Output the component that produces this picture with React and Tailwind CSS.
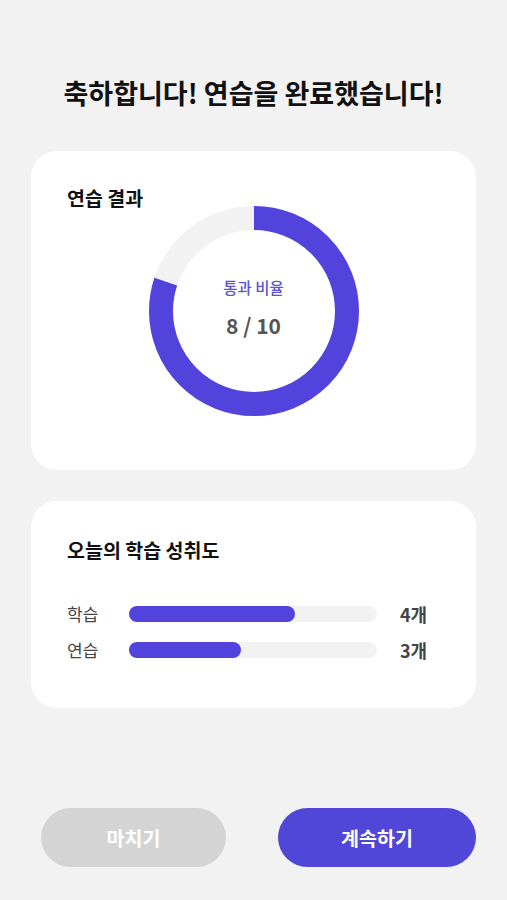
import React from 'react';

const font = { fontFamily: '"Noto Sans CJK KR", "Noto Sans", sans-serif' };

function Donut({ pass, total }) {
  const r = 93;
  const c = 2 * Math.PI * r;
  const dash = (pass / total) * c;
  return (
    <div className="relative w-[210px] h-[210px]">
      <svg width="210" height="210" viewBox="0 0 210 210">
        <circle cx="105" cy="105" r={r} fill="none" stroke="#f2f2f2" strokeWidth="24" />
        <circle
          cx="105"
          cy="105"
          r={r}
          fill="none"
          stroke="#5243dc"
          strokeWidth="24"
          strokeDasharray={`${dash} ${c}`}
          transform="rotate(-90 105 105)"
        />
      </svg>
      <div className="absolute inset-0 flex flex-col items-center justify-center">
        <div className="text-[15.5px] leading-[20px] text-[#5e54d4] font-medium mt-[-6px]">통과 비율</div>
        <div className="text-[21px] leading-[28px] font-bold text-[#555555] mt-[14px]">8 / 10</div>
      </div>
    </div>
  );
}

function Row({ label, pct, count }) {
  return (
    <div className="flex items-center h-[36px]">
      <div className="w-[62px] text-[17px] text-[#444444]">{label}</div>
      <div className="w-[248px] h-[16px] rounded-full bg-[#f2f2f2]">
        <div className="h-full rounded-full bg-[#5243dc]" style={{ width: pct + '%' }} />
      </div>
      <div className="ml-[23px] text-[18px] font-bold text-[#444444]">{count}</div>
    </div>
  );
}

export default function App() {
  return (
    <div style={font} className="min-h-[900px] w-full bg-[#f2f2f2] px-[31px] text-[#111111]">
      <h1 className="pt-[76px] text-center text-[27px] leading-[34px] font-bold">
        축하합니다! 연습을 완료했습니다!
      </h1>

      <div className="mt-[41px] h-[319px] rounded-[26px] bg-white px-[36px] pt-[35px]">
        <div className="text-[19.5px] leading-[24px] font-semibold">연습 결과</div>
        <div className="flex justify-center mt-[-4px]">
          <Donut pass={8} total={10} />
        </div>
      </div>

      <div className="mt-[31px] h-[207px] rounded-[26px] bg-white px-[36px] pt-[37px]">
        <div className="text-[19.5px] leading-[24px] font-semibold">오늘의 학습 성취도</div>
        <div className="mt-[34px]">
          <Row label="학습" pct={67} count="4개" />
          <Row label="연습" pct={45} count="3개" />
        </div>
      </div>

      <div className="mt-[100px] flex justify-between pl-[10px]">
        <button className="w-[185px] h-[59px] rounded-full bg-[#d4d4d4] text-white text-[19.5px] font-semibold">
          마치기
        </button>
        <button className="w-[198px] h-[59px] rounded-full bg-[#5046d8] text-white text-[19.5px] font-bold">
          계속하기
        </button>
      </div>
    </div>
  );
}
